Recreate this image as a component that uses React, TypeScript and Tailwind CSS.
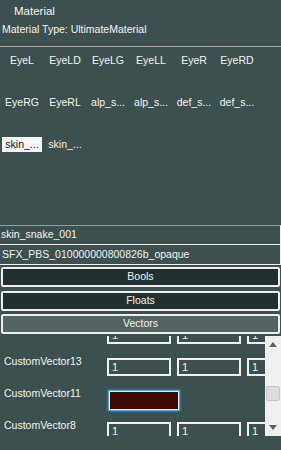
const tiles = [
  ['EyeL', 'EyeLD', 'EyeLG', 'EyeLL', 'EyeR', 'EyeRD'],
  ['EyeRG', 'EyeRL', 'alp_s...', 'alp_s...', 'def_s...', 'def_s...'],
  ['skin_...', 'skin_...'],
];

type VecRow = { name: string; color?: boolean };

// first row is scrolled up out of view, only its boxes peek in
const rows: VecRow[] = [
  { name: '' },
  { name: 'CustomVector13' },
  { name: 'CustomVector11', color: true },
  { name: 'CustomVector8' },
  { name: 'CustomVector7' },
];

function NumBox() {
  return (
    <div className="w-[64px] h-[18px] shrink-0 border-2 border-[#f2f2f2] flex items-center pl-[3px] text-[11px] leading-none">
      1
    </div>
  );
}

function Arrow({ up }: { up?: boolean }) {
  return (
    <svg width="8" height="5" viewBox="0 0 8 5">
      <path d={up ? 'M0 5 L4 0 L8 5 Z' : 'M0 0 L4 5 L8 0 Z'} fill="#606060" />
    </svg>
  );
}

export default function App() {
  return (
    <div
      className="w-[281px] h-[450px] bg-[#3d5050] overflow-hidden text-[#f4f4ee] text-[10.5px]"
      style={{ fontFamily: '"Liberation Sans", Arial, sans-serif' }}
    >
      {/* material header + texture grid */}
      <div className="h-[225px]">
        <div className="pt-[4px] pl-[14px] text-[11.5px] leading-[14px]">Material</div>
        <div className="mt-[5px] pl-[2px] leading-[13px]">Material Type: UltimateMaterial</div>
        <div className="mt-[10px] h-px bg-[#a8a8a8]" />
        <div className="mt-[6px] pl-[2px] grid grid-cols-[repeat(6,40px)] gap-x-[3px] gap-y-[27px]">
          {tiles.map((row, r) =>
            row.map((t, i) => (
              <div
                key={`${r}-${i}`}
                className={`h-[15px] flex items-center justify-center ${
                  r === 2 && i === 0 ? 'bg-[#f4f4f4] text-[#151515]' : ''
                }`}
              >
                {t}
              </div>
            ))
          )}
        </div>
      </div>

      {/* name fields */}
      <div className="h-[20px] border-t border-[#9a9a9a] border-b border-r border-b-[#f0f0f0] border-r-[#f0f0f0] flex items-center pl-[1px]">
        skin_snake_001
      </div>
      <div className="h-[20px] border-b border-r border-[#f0f0f0] flex items-center pl-[2px]">
        SFX_PBS_010000000800826b_opaque
      </div>

      {/* section buttons */}
      <div className="mt-[2px] ml-[1px] w-[279px] h-[20px] border-2 border-[#eeeeee] rounded-[2px] bg-[#212f2f] flex items-center justify-center">
        Bools
      </div>
      <div className="mt-[4px] ml-[1px] w-[279px] h-[20px] border-2 border-[#eeeeee] rounded-[2px] bg-[#212f2f] flex items-center justify-center">
        Floats
      </div>
      <div className="mt-[3px] ml-[1px] w-[279px] h-[20px] border-2 border-[#eeeeee] rounded-[2px] bg-[#536361] flex items-center justify-center">
        Vectors
      </div>

      {/* vector list */}
      <div className="mt-[2px] h-[100px] flex">
        <div className="w-[265px] overflow-hidden">
          <div className="-mt-[15px]">
            {rows.map((row, idx) => (
              <div key={idx} className="h-[32px] flex">
                <div className="w-[107px] shrink-0 pl-[4px] leading-[16px] text-[10.5px]">{row.name}</div>
                {row.color ? (
                  <div className="mt-[5px] ml-[1px] w-[72px] h-[21px] border border-[#3aaee6] shadow-[0_0_2px_#3aaee6]">
                    <div className="w-full h-full border border-[#e8f4fa] bg-[#3f0900]" />
                  </div>
                ) : (
                  <div className="mt-[5px] flex gap-[6px]">
                    <NumBox />
                    <NumBox />
                    <NumBox />
                  </div>
                )}
              </div>
            ))}
          </div>
        </div>
        <div className="w-[16px] bg-[#f0f0f0] flex flex-col">
          <div className="h-[17px] flex items-center justify-center">
            <Arrow up />
          </div>
          <div className="mt-[33px] mx-[1px] h-[15px] rounded-[2px] border border-[#c6c6c6] bg-[#dcdcdc]" />
          <div className="flex-1" />
          <div className="h-[17px] flex items-center justify-center">
            <Arrow />
          </div>
        </div>
      </div>
    </div>
  );
}
